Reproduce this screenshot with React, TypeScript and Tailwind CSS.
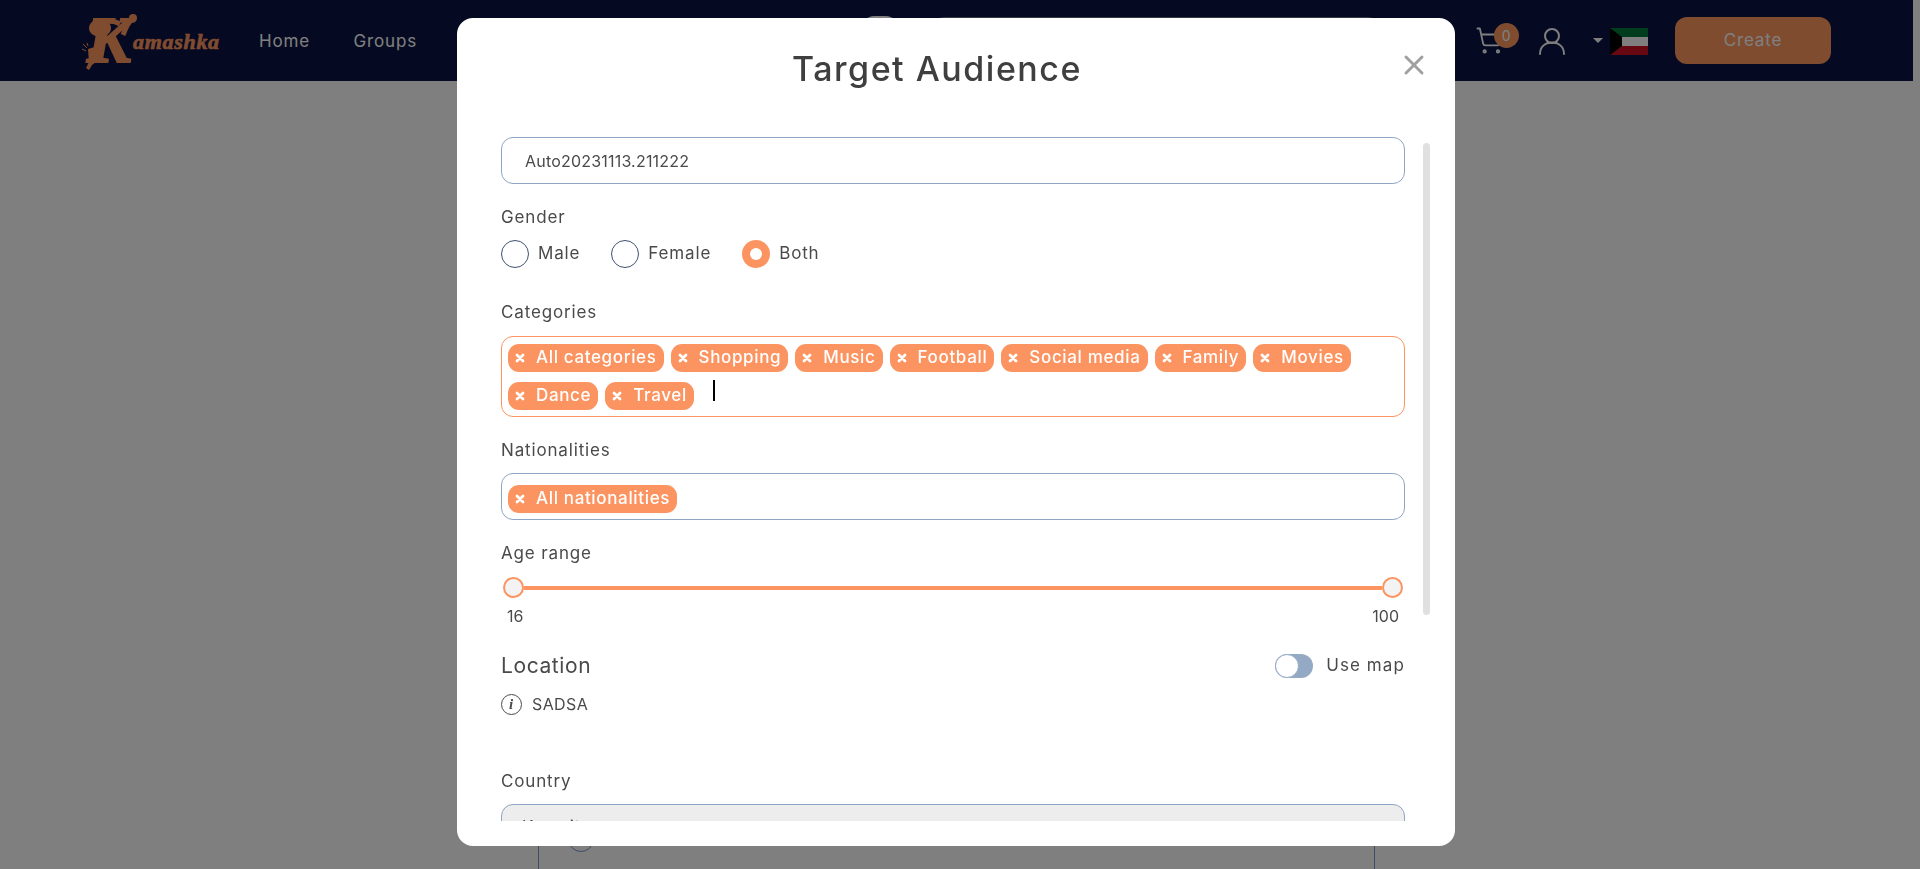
import { ShoppingCart, X } from 'lucide-react';

const categories = [
  ['All categories', 'Shopping', 'Music', 'Football', 'Social media', 'Family', 'Movies'],
  ['Dance', 'Travel'],
];

function Chip({ label }: { label: string }) {
  return (
    <div className="flex h-[28px] items-center rounded-[11px] bg-[#fb9460] pl-[7px] pr-[7px] text-[17px] font-medium tracking-[0.65px] text-white">
      <svg width="10" height="10" viewBox="0 0 10 10" className="mr-[11px] shrink-0">
        <path d="M2 2 L8 8 M8 2 L2 8" stroke="#fff" strokeWidth="2.8" strokeLinecap="round" />
      </svg>
      {label}
    </div>
  );
}

function Radio({ label, checked }: { label: string; checked?: boolean }) {
  return (
    <div className="flex items-center">
      {checked ? (
        <div className="flex h-[28px] w-[28px] items-center justify-center rounded-full bg-[#fb9460]">
          <div className="h-[12px] w-[12px] rounded-full bg-white" />
        </div>
      ) : (
        <div className="h-[28px] w-[28px] rounded-full border border-[#3f5170]" />
      )}
      <span className="ml-[9px]">{label}</span>
    </div>
  );
}

function Logo() {
  return (
    <div className="relative h-[60px] w-[140px] shrink-0 text-[#fe9960]">
      <svg width="60" height="40" viewBox="0 0 60 40" className="absolute left-[5px] top-0">
        <ellipse cx="13" cy="17" rx="11" ry="9" fill="currentColor" />
        <path d="M14 12 C22 9 28 10 33 13" stroke="currentColor" strokeWidth="5" fill="none" />
        <circle cx="46" cy="7" r="4" fill="currentColor" />
        <path d="M36 24 C39 16 42 10 46 7" stroke="currentColor" strokeWidth="5" fill="none" />
      </svg>
      <span className="absolute left-[5px] top-[-4px] font-['Liberation_Serif',serif] text-[66px] font-bold italic leading-none [-webkit-text-stroke:2px_#fe9960]">
        K
      </span>
      <span className="absolute left-[51px] top-[20px] font-['Liberation_Serif',serif] text-[22px] font-bold italic leading-none tracking-[0.7px] [-webkit-text-stroke:0.7px_#fe9960]">
        amashka
      </span>
      <svg width="22" height="28" viewBox="0 0 22 28" className="absolute left-0 top-[32px]">
        <path d="M6 6 L20 2 L18 16 L10 22 L7 27 L4 25 L7 19 Z" fill="currentColor" />
        <path d="M0 6 L4 8 M1 1 L5 5 M5 0 L6 3" stroke="currentColor" strokeWidth="1" />
      </svg>
    </div>
  );
}

function App() {
  return (
    <div className="relative h-screen overflow-hidden bg-white font-['Inter',sans-serif] text-[17px] tracking-[0.85px]">
      {/* page behind the dialog */}
      <header className="mr-[7px] flex h-[81px] items-center bg-[#0a1444] pl-[82px] text-white">
        <Logo />
        <nav className="ml-[37px] mt-[2px] flex w-[158px] justify-between">
          <span>Home</span>
          <span>Groups</span>
        </nav>
        <div className="ml-[445px] h-[49px] w-[36px] rounded-xl bg-white" />
        <div className="ml-[34px] h-[47px] w-[448px] rounded-xl border border-gray-500" />
        <div className="relative ml-[95px] h-[30px] w-[30px]">
          <ShoppingCart size={29} strokeWidth={1.5} className="text-white" />
          <div className="absolute left-[19px] top-[-3px] flex h-[25px] w-[25px] items-center justify-center rounded-full bg-[#fe9960] text-[14px]">
            0
          </div>
        </div>
        <svg width="28" height="28" viewBox="0 0 28 28" fill="none" stroke="#fff" strokeWidth="2" className="ml-[33px]">
          <circle cx="14" cy="9" r="7" />
          <path d="M2 27 C2 20 7 15.5 14 15.5 C21 15.5 26 20 26 27" strokeLinecap="round" />
        </svg>
        <div className="ml-[27px] h-0 w-0 border-x-[5px] border-t-[5px] border-x-transparent border-t-white" />
        <svg width="38" height="27" viewBox="0 0 38 27" className="ml-[7px] mt-[2px]">
          <rect width="38" height="9" fill="#007a3d" />
          <rect y="9" width="38" height="9" fill="#fff" />
          <rect y="18" width="38" height="9" fill="#ce1126" />
          <path d="M0 0 L12 9 L12 18 L0 27 Z" fill="#000" />
        </svg>
        <div className="ml-[27px] flex h-[47px] w-[156px] items-center justify-center rounded-xl bg-[#fe9960] pt-[1px]">
          Create
        </div>
      </header>
      <div className="mr-[545px] ml-[538px] h-[800px] border-x border-[#7a9bd0] pl-[29px] pt-[745px]">
        <div className="h-[26px] w-[26px] rounded-full border border-[#7a9bd0]" />
      </div>

      {/* dialog */}
      <div className="fixed inset-0 bg-black/50">
        <div className="absolute left-[457px] top-[18px] flex h-[828px] w-[998px] flex-col rounded-2xl bg-white text-[#4a4a4a]">
          <div className="relative flex h-[94px] shrink-0 items-center justify-center pr-[38px] pt-[7px]">
            <h2 className="text-[34px] font-medium tracking-[1.5px] text-[#3f3f3f]">Target Audience</h2>
            <X size={32} strokeWidth={2.2} className="absolute right-[25px] top-[31px] text-[#a0a0a0]" />
          </div>

          <div className="relative h-[709px] shrink-0 overflow-hidden pl-[44px] pr-[50px] pt-[25px]">
            <div className="absolute left-[966px] top-[31px] h-[472px] w-[7px] rounded-full bg-[#e0e0e0]" />

            <div className="flex h-[47px] items-center rounded-xl border border-[#8fa5c3] pl-[23px] text-[16px] tracking-[0.2px]">
              Auto20231113.211222
            </div>

            <div className="mt-[21px] leading-[24px]">Gender</div>
            <div className="mt-[11px] flex gap-[31px]">
              <Radio label="Male" />
              <Radio label="Female" />
              <Radio label="Both" checked />
            </div>

            <div className="mt-[32px] leading-[24px]">Categories</div>
            <div className="mt-[12px] flex h-[81px] flex-col gap-[10px] rounded-xl border border-[#fb9460] pl-[6px] pt-[7px]">
              {categories.map((row, i) => (
                <div key={i} className="flex gap-[7px]">
                  {row.map((c) => (
                    <Chip key={c} label={c} />
                  ))}
                  {i === 1 && <div className="ml-[12px] mt-[-2px] h-[21px] w-[2px] bg-black" />}
                </div>
              ))}
            </div>

            <div className="mt-[21px] leading-[24px]">Nationalities</div>
            <div className="mt-[11px] flex h-[47px] items-center rounded-xl border border-[#8fa5c3] pl-[6px] pt-[4px]">
              <Chip label="All nationalities" />
            </div>

            <div className="mt-[21px] leading-[24px]">Age range</div>
            <div className="mt-[12px] flex h-[21px] items-center px-[2px]">
              <div className="h-[21px] w-[21px] shrink-0 rounded-full border-2 border-[#fb9460] bg-[#f3f3f3]" />
              <div className="h-[4px] flex-1 bg-[#fb9460]" />
              <div className="h-[21px] w-[21px] shrink-0 rounded-full border-2 border-[#fb9460] bg-[#f3f3f3]" />
            </div>
            <div className="mt-[6px] flex justify-between pl-[6px] pr-[6px] text-[16px] leading-[24px] tracking-normal">
              <span>16</span>
              <span>100</span>
            </div>

            <div className="mt-[26px] flex h-[24px] items-center">
              <span className="text-[21px] tracking-[0.6px]">Location</span>
              <div className="ml-auto h-[24px] w-[38px] rounded-full bg-[#94a9c4]">
                <div className="h-[24px] w-[24px] rounded-full border border-[#94a9c4] bg-white" />
              </div>
              <span className="ml-[13px] tracking-[1.1px]">Use map</span>
            </div>

            <div className="mt-[14px] flex h-[24px] items-center">
              <div className="flex h-[21px] w-[21px] items-center justify-center rounded-full border border-[#4a4a4a] font-['Liberation_Serif',serif] text-[15px] font-bold italic">
                i
              </div>
              <span className="ml-[10px] text-[16px] tracking-[0.4px]">SADSA</span>
            </div>

            <div className="mt-[53px] leading-[24px]">Country</div>
            <div className="mt-[11px] flex h-[47px] items-center rounded-xl border border-[#8fa5c3] bg-[#ededed] pl-[20px]">
              Kuwait
            </div>
          </div>
        </div>
      </div>
    </div>
  );
}

export default App;
